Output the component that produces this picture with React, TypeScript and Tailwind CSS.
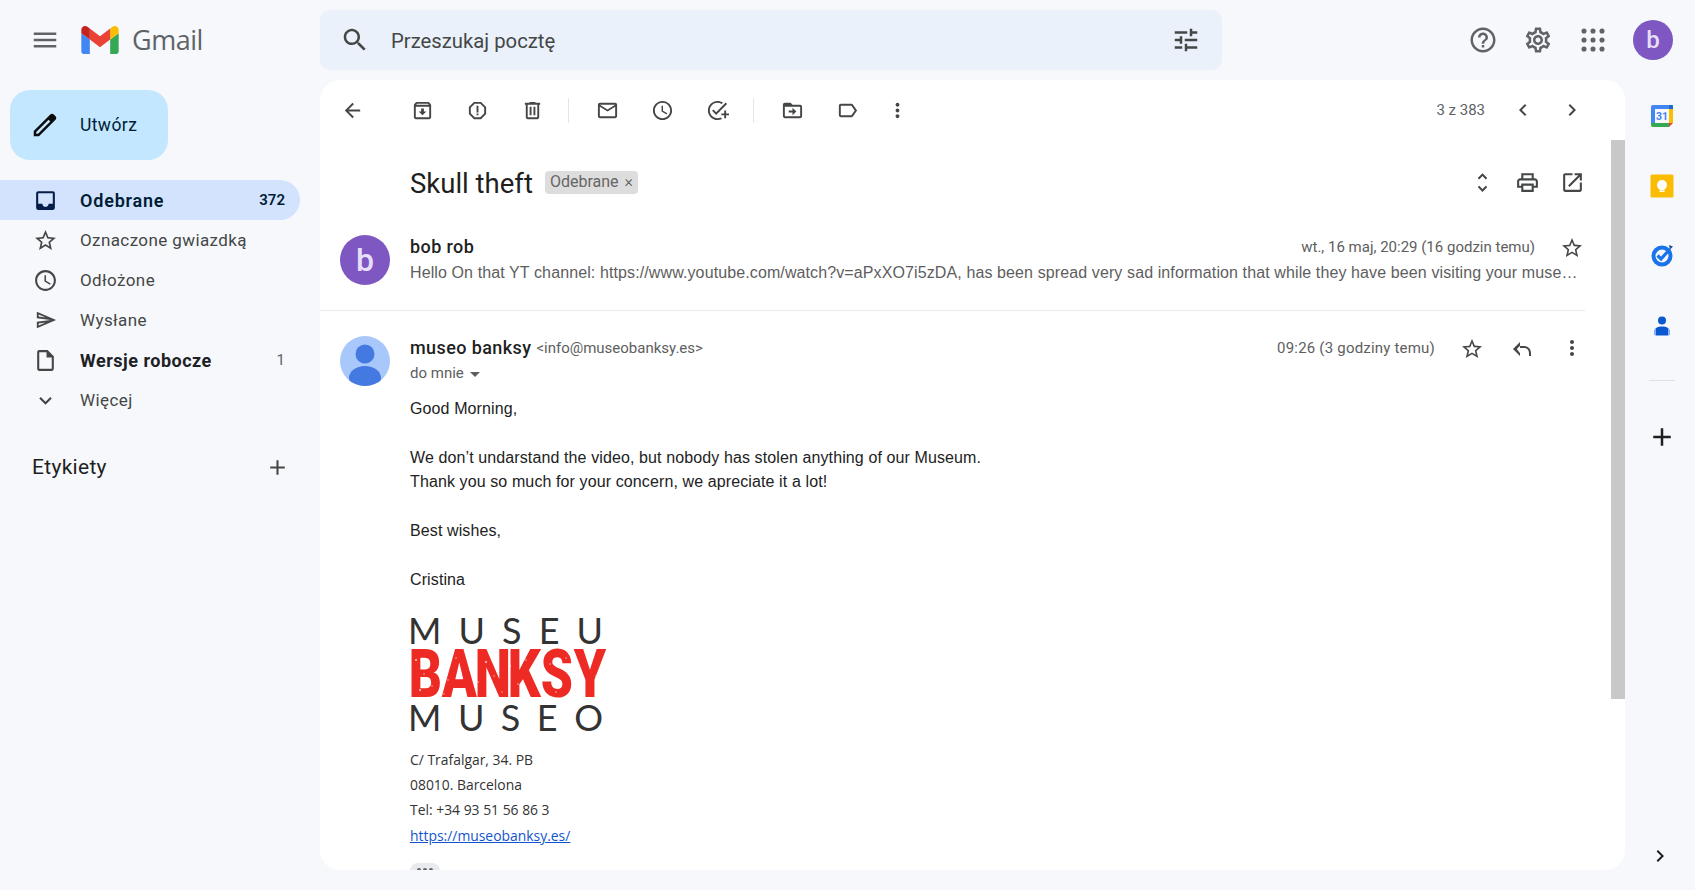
import type { ReactNode } from "react";

const P = {
  menu: "M3 18h18v-2H3v2zm0-5h18v-2H3v2zm0-7v2h18V6H3z",
  search: "M15.5 14h-.79l-.28-.27C15.41 12.59 16 11.11 16 9.5 16 5.91 13.09 3 9.5 3S3 5.91 3 9.5 5.91 16 9.5 16c1.61 0 3.09-.59 4.23-1.57l.27.28v.79l5 4.99L20.49 19l-4.99-5zm-6 0C7.01 14 5 11.99 5 9.5S7.01 5 9.5 5 14 7.01 14 9.5 11.99 14 9.5 14z",
  tune: "M3 17v2h6v-2H3zM3 5v2h10V5H3zm10 16v-2h8v-2h-8v-2h-2v6h2zM7 9v2H3v2h4v2h2V9H7zm14 4v-2H11v2h10zm-6-4h2V7h4V5h-4V3h-2v6z",
  help: "M11 18h2v-2h-2v2zm1-16C6.48 2 2 6.48 2 12s4.48 10 10 10 10-4.48 10-10S17.52 2 12 2zm0 18c-4.41 0-8-3.59-8-8s3.59-8 8-8 8 3.59 8 8-3.59 8-8 8zm0-14c-2.21 0-4 1.79-4 4h2c0-1.1.9-2 2-2s2 .9 2 2c0 2-3 1.75-3 5h2c0-2.25 3-2.5 3-5 0-2.21-1.79-4-4-4z",
  settings: "M19.43 12.98c.04-.32.07-.64.07-.98 0-.34-.03-.66-.07-.98l2.11-1.65c.19-.15.24-.42.12-.64l-2-3.46c-.09-.16-.26-.25-.44-.25-.06 0-.12.01-.17.03l-2.49 1c-.52-.4-1.08-.73-1.69-.98l-.38-2.65C14.46 2.18 14.25 2 14 2h-4c-.25 0-.46.18-.49.42l-.38 2.65c-.61.25-1.17.59-1.69.98l-2.49-1c-.06-.02-.12-.03-.18-.03-.17 0-.34.09-.43.25l-2 3.46c-.13.22-.07.49.12.64l2.11 1.65c-.04.32-.07.65-.07.98 0 .33.03.66.07.98l-2.11 1.65c-.19.15-.24.42-.12.64l2 3.46c.09.16.26.25.44.25.06 0 .12-.01.17-.03l2.49-1c.52.4 1.08.73 1.69.98l.38 2.65c.03.24.24.42.49.42h4c.25 0 .46-.18.49-.42l.38-2.65c.61-.25 1.17-.59 1.69-.98l2.49 1c.06.02.12.03.18.03.17 0 .34-.09.43-.25l2-3.46c.12-.22.07-.49-.12-.64l-2.11-1.65zm-1.98-1.71c.04.31.05.52.05.73 0 .21-.02.43-.05.73l-.14 1.13.89.7 1.08.84-.7 1.21-1.27-.51-1.04-.42-.9.68c-.43.32-.84.56-1.25.73l-1.06.43-.16 1.13-.2 1.35h-1.4l-.19-1.35-.16-1.13-1.06-.43c-.43-.18-.83-.41-1.23-.71l-.91-.7-1.06.43-1.27.51-.7-1.21 1.08-.84.89-.7-.14-1.13c-.03-.31-.05-.54-.05-.74s.02-.43.05-.73l.14-1.13-.89-.7-1.08-.84.7-1.21 1.27.51 1.04.42.9-.68c.43-.32.84-.56 1.25-.73l1.06-.43.16-1.13.2-1.35h1.39l.19 1.35.16 1.13 1.06.43c.43.18.83.41 1.23.71l.91.7 1.06-.43 1.27-.51.7 1.21-1.07.85-.89.7.14 1.13zM12 8c-2.21 0-4 1.79-4 4s1.79 4 4 4 4-1.79 4-4-1.79-4-4-4zm0 6c-1.1 0-2-.9-2-2s.9-2 2-2 2 .9 2 2-.9 2-2 2z",
  back: "M20 11H7.83l5.59-5.59L12 4l-8 8 8 8 1.41-1.41L7.83 13H20v-2z",
  archive: "M20.54 5.23l-1.39-1.68C18.88 3.21 18.47 3 18 3H6c-.47 0-.88.21-1.16.55L3.46 5.23C3.17 5.57 3 6.02 3 6.5V19c0 1.1.9 2 2 2h14c1.1 0 2-.9 2-2V6.5c0-.48-.17-.93-.46-1.27zM6.24 5h11.52l.81.97H5.44l.8-.97zM5 19V8h14v11H5zm8.45-9h-2.9v3H8l4 4 4-4h-2.55z",
  report: "M15.73 3H8.27L3 8.27v7.46L8.27 21h7.46L21 15.73V8.27L15.73 3zM19 14.9L14.9 19H9.1L5 14.9V9.1L9.1 5h5.8L19 9.1v5.8zM11 7h2v7h-2zm0 8h2v2h-2z",
  trash: "M15 4V3H9v1H4v2h1v13c0 1.1.9 2 2 2h10c1.1 0 2-.9 2-2V6h1V4h-5zm2 15H7V6h10v13zM9 8h2v9H9zm4 0h2v9h-2z",
  mail: "M20 4H4c-1.1 0-1.99.9-1.99 2L2 18c0 1.1.9 2 2 2h16c1.1 0 2-.9 2-2V6c0-1.1-.9-2-2-2zm0 14H4V8l8 5 8-5v10zm-8-7L4 6h16l-8 5z",
  clock: "M11.99 2C6.47 2 2 6.48 2 12s4.47 10 9.99 10C17.52 22 22 17.52 22 12S17.52 2 11.99 2zM12 20c-4.42 0-8-3.58-8-8s3.58-8 8-8 8 3.58 8 8-3.58 8-8 8zm.5-13H11v6l5.25 3.15.75-1.23-4.5-2.67z",
  task: "M22 5.18L10.59 16.6l-4.24-4.24 1.41-1.41 2.83 2.83 10-10L22 5.18zM12 20c-4.41 0-8-3.59-8-8s3.59-8 8-8c1.57 0 3.04.46 4.28 1.25l1.45-1.45C16.1 2.67 14.13 2 12 2 6.48 2 2 6.48 2 12s4.48 10 10 10c1.73 0 3.36-.44 4.78-1.22l-1.5-1.5c-1 .46-2.11.72-3.28.72zm7-5h-3v2h3v3h2v-3h3v-2h-3v-3h-2v3z",
  move: "M20 6h-8l-2-2H4c-1.1 0-1.99.9-1.99 2L2 18c0 1.1.9 2 2 2h16c1.1 0 2-.9 2-2V8c0-1.1-.9-2-2-2zm0 12H4V8h16v10zm-8-1l4-4-4-4v3H8v2h4v3z",
  label: "M17.63 5.84C17.27 5.33 16.67 5 16 5L5 5.01C3.9 5.01 3 5.9 3 7v10c0 1.1.9 1.99 2 1.99L16 19c.67 0 1.27-.33 1.63-.84L22 12l-4.37-6.16zM16 17H5V7h11l3.55 5L16 17z",
  more: "M12 8c1.1 0 2-.9 2-2s-.9-2-2-2-2 .9-2 2 .9 2 2 2zm0 2c-1.1 0-2 .9-2 2s.9 2 2 2 2-.9 2-2-.9-2-2-2zm0 6c-1.1 0-2 .9-2 2s.9 2 2 2 2-.9 2-2-.9-2-2-2z",
  left: "M15.41 7.41L14 6l-6 6 6 6 1.41-1.41L10.83 12z",
  right: "M10 6L8.59 7.41 13.17 12l-4.58 4.59L10 18l6-6z",
  unfold: "M12 5.83L15.17 9l1.41-1.41L12 3 7.41 7.59 8.83 9 12 5.83zm0 12.34L8.83 15l-1.41 1.41L12 21l4.59-4.59L15.17 15 12 18.17z",
  print: "M19 8h-1V3H6v5H5c-1.66 0-3 1.34-3 3v6h4v4h12v-4h4v-6c0-1.66-1.34-3-3-3zM8 5h8v3H8V5zm8 14H8v-4h8v4zm4-4h-2v-2H6v2H4v-4c0-.55.45-1 1-1h14c.55 0 1 .45 1 1v4z",
  open: "M19 19H5V5h7V3H5c-1.11 0-2 .9-2 2v14c0 1.1.89 2 2 2h14c1.1 0 2-.9 2-2v-7h-2v7zM14 3v2h3.59l-9.83 9.83 1.41 1.41L19 6.41V10h2V3h-7z",
  star: "M22 9.24l-7.19-.62L12 2 9.19 8.63 2 9.24l5.46 4.73L5.82 21 12 17.27 18.18 21l-1.63-7.03L22 9.24zM12 15.4l-3.76 2.27 1-4.28-3.32-2.88 4.38-.38L12 6.1l1.71 4.04 4.38.38-3.32 2.88 1 4.28L12 15.4z",
  reply: "M10 9V5l-7 7 7 7v-2.83L6.83 12 10 8.83V11h4c3.3 0 5 2.2 5 5.5V19h2v-2.5C21 11.8 18 9 14 9h-4z",
  inbox: "M19 3H5C3.9 3 3 3.9 3 5v14c0 1.1.9 2 2 2h14c1.1 0 2-.9 2-2V5C21 3.9 20.1 3 19 3zM19 15h-4c0 1.66-1.34 3-3 3s-3-1.34-3-3H5V5h14V15z",
  send: "M4.01 6.03l7.51 3.22-7.52-1 .01-2.22m7.5 8.72L4 17.97v-2.22l7.51-1M2.01 3L2 10l15 2-15 2 .01 7L23 12 2.01 3z",
  draft: "M14 2H6c-1.1 0-1.99.9-1.99 2L4 20c0 1.1.89 2 1.99 2H18c1.1 0 2-.9 2-2V8l-6-6zM6 20V4h7v5h5v11H6z",
  down: "M16.59 8.59L12 13.17 7.41 8.59 6 10l6 6 6-6z",
  add: "M19 13h-6v6h-2v-6H5v-2h6V5h2v6h6v2z",
  pencil: "M20.41 4.94l-1.35-1.35c-.78-.78-2.05-.78-2.83 0L3 16.82V21h4.18L20.41 7.77c.79-.78.79-2.05 0-2.83zm-14 14.12L5 19v-1.36l9.82-9.82 1.41 1.41-9.82 9.83z",
};

function Icon({ d, className }: { d: string; className: string }) {
  return (
    <svg viewBox="0 0 24 24" fill="currentColor" className={"shrink-0 " + className}>
      <path d={d} />
    </svg>
  );
}

function GmailLogo() {
  return (
    <svg viewBox="52 42 88 66" className="h-[28px] w-[38px]">
      <path fill="#4285f4" d="M58 108h14V74L52 59v43c0 3.32 2.69 6 6 6" />
      <path fill="#34a853" d="M120 108h14c3.32 0 6-2.69 6-6V59l-20 15" />
      <path fill="#fbbc04" d="M120 48v26l20-15v-8c0-7.42-8.47-11.65-14.4-7.2" />
      <path fill="#ea4335" d="M72 74V48l24 18 24-18v26L96 92" />
      <path fill="#c5221f" d="M52 51v8l20 15V48l-5.6-4.2c-5.94-4.45-14.4-.22-14.4 7.2" />
    </svg>
  );
}

function NavRow({ icon, label, count, active, bold, iconClass }: { icon: string; label: string; count?: string; active?: boolean; bold?: boolean; iconClass?: string }) {
  return (
    <div
      className={[
        "flex h-[40px] w-[300px] items-center rounded-r-full pl-[33px] pr-[15px]",
        active
          ? "bg-[#d3e3fd] text-[18px] font-semibold tracking-[0.8px] text-[#001d35]"
          : bold
            ? "text-[18px] font-bold tracking-[0.5px] text-[#202124]"
            : "text-[17px] tracking-[0.4px] text-[#444746]",
      ].join(" ")}
    >
      <span className="flex h-[25px] w-[25px] shrink-0 items-center justify-center">
        <Icon d={icon} className={(iconClass ?? "h-[25px] w-[25px]") + (active ? " text-[#041e49]" : " text-[#444746]")} />
      </span>
      <span className="ml-[22px] flex-1 pt-[1px]">{label}</span>
      {count ? <span className={active ? "text-[15px] font-semibold tracking-normal" : "text-[15px] font-normal tracking-normal text-[#5f6368]"}>{count}</span> : null}
    </div>
  );
}

function Tool({ d, className }: { d: string; className?: string }) {
  return (
    <div className={"flex h-[40px] w-[55px] items-center justify-center text-[#444746] " + (className ?? "")}>
      <Icon d={d} className="h-[23px] w-[23px]" />
    </div>
  );
}

function Divider() {
  return <div className="mx-[8px] h-[25px] w-px bg-[#e3e5e8]" />;
}

function Avatar({ children, className }: { children: ReactNode; className: string }) {
  return (
    <div className={"flex h-[50px] w-[50px] shrink-0 items-center justify-center overflow-hidden rounded-full " + className}>
      {children}
    </div>
  );
}

const SPECKS = [
  [6, 8], [14, 22], [22, 34], [30, 12], [38, 28], [46, 6], [52, 38], [60, 18], [68, 30], [76, 10],
  [84, 24], [92, 40], [100, 14], [108, 32], [116, 8], [124, 20], [132, 36], [140, 12], [148, 28], [156, 6],
  [164, 18], [172, 34], [180, 10], [186, 24], [10, 38], [34, 42], [58, 4], [82, 8], [112, 42], [146, 40],
];

function MuseumLogo() {
  return (
    <div className="mt-[25px] w-[193px] font-['Lato',sans-serif] text-[#333333]">
      <div className="-ml-[2px] flex h-[26px] items-center justify-between text-[36px] leading-[26px]">
        {"MUSEU".split("").map((c, i) => <span key={i}>{c}</span>)}
      </div>
      <div className="relative mt-[8px] h-[48px]">
        <div className="-ml-[5px] grid h-full grid-cols-6 font-['Roboto',sans-serif] text-[66px] font-black leading-[48px] text-[#ee2a24]">
          {"BANKSY".split("").map((c, i) => <span key={i} className="scale-x-[0.78] text-center">{c}</span>)}
        </div>
        <svg viewBox="0 0 193 46" className="absolute inset-0 h-full w-full">
          {SPECKS.map(([x, y], i) => <circle key={i} cx={x} cy={y} r={i % 3 === 0 ? 1.1 : 0.7} fill="#ffffff" opacity="0.75" />)}
        </svg>
      </div>
      <div className="-ml-[2px] mt-[5px] flex h-[26px] items-center justify-between text-[36px] leading-[26px]">
        {"MUSEO".split("").map((c, i) => <span key={i}>{c}</span>)}
      </div>
    </div>
  );
}

function RailIcons() {
  return (
    <div className="flex flex-col items-center pl-[3px] pt-[24px]">
      <svg viewBox="0 0 24 24" className="h-[24px] w-[24px]">
        <path fill="#4285f4" d="M1 3c0-1.100.9-2 2-2h17v4H5v14H1z" />
        <path fill="#1967d2" d="M19 1h3c.6 0 1 .4 1 1v3h-4z" />
        <path fill="#fbbc04" d="M19 5h4v14h-4z" />
        <path fill="#34a853" d="M1 19h18v4H3c-1.100 0-2-.9-2-2z" />
        <path fill="#ea4335" d="M19 19h4l-4 4z" />
        <text x="12" y="16" textAnchor="middle" fontSize="10.5" fontWeight="700" fontFamily="Roboto, sans-serif" fill="#4285f4">31</text>
      </svg>
      <svg viewBox="0 0 24 24" className="mt-[46px] h-[24px] w-[24px]">
        <rect x="0.5" y="0.5" width="23" height="23" rx="1.5" fill="#fbbc04" />
        <circle cx="12" cy="11" r="5" fill="#ffffff" />
        <rect x="9.5" y="14" width="5" height="2" fill="#ffffff" />
        <rect x="9.5" y="16.5" width="5" height="1.500" fill="#ffffff" />
      </svg>
      <svg viewBox="0 0 24 24" className="mt-[45px] h-[24px] w-[24px]">
        <circle cx="12" cy="13" r="8.5" fill="none" stroke="#1a73e8" strokeWidth="4" />
        <path d="M7.5 12.5l3.5 3.5 9-10" fill="none" stroke="#1a73e8" strokeWidth="3.2" />
        <path d="M19 2l4 1.5-3 3z" fill="#174ea6" />
      </svg>
      <svg viewBox="0 0 24 24" className="mt-[47px] h-[24px] w-[24px]">
        <circle cx="12" cy="6.5" r="4" fill="#0b57d0" />
        <path d="M4 19c0-4 2-6.5 8-6.5s8 2.500 8 6.500c0 1.500-1 2.500-2.500 2.500h-11C5 21.500 4 20.500 4 19z" fill="#0b57d0" />
        <path d="M4 19c0-2 .5-3.500 2-4.500V21.500C5 21.500 4 20.500 4 19zM20 19c0-2-.5-3.500-2-4.500v7c1 0 2-1 2-2.500z" fill="#8ab4f8" />
      </svg>
      <div className="mt-[42px] h-px w-[26px] bg-[#dde0e4]" />
      <Icon d={P.add} className="mt-[41px] h-[30px] w-[30px] text-[#1f1f1f]" />
    </div>
  );
}

export default function App() {
  return (
    <div className="flex h-[890px] w-[1695px] flex-col overflow-hidden bg-[#f6f8fc] font-['Roboto',sans-serif]">
      {/* top bar */}
      <header className="flex h-[80px] shrink-0 items-center">
        <div className="flex w-[320px] items-center pl-[30px]">
          <Icon d={P.menu} className="h-[30px] w-[30px] text-[#5f6368]" />
          <div className="ml-[21px]"><GmailLogo /></div>
          <span className="ml-[13px] font-['Open_Sans',sans-serif] text-[27px] tracking-[-0.5px] text-[#5f6368]">Gmail</span>
        </div>
        <div className="flex h-[60px] w-[902px] items-center rounded-[10px] bg-[#eaf1fb] px-[20px]">
          <Icon d={P.search} className="h-[30px] w-[30px] text-[#444746]" />
          <span className="ml-[21px] flex-1 pt-[2px] text-[20.300px] text-[#444746]">Przeszukaj pocztę</span>
          <Icon d={P.tune} className="-ml-[1px] mr-[1px] h-[30px] w-[30px] text-[#444746]" />
        </div>
        <div className="ml-[246px] flex items-center">
          <Icon d={P.help} className="h-[30px] w-[30px] text-[#5f6368]" />
          <Icon d={P.settings} className="ml-[25px] h-[30px] w-[30px] text-[#5f6368]" />
          <svg viewBox="0 0 20 20" fill="#5f6368" className="ml-[25px] h-[30px] w-[30px]">
            {[4, 10, 16].flatMap((y) => [4, 10, 16].map((x) => <circle key={`${x}-${y}`} cx={x} cy={y} r="1.7" />))}
          </svg>
          <div className="ml-[25px] flex h-[40px] w-[40px] items-center justify-center rounded-full bg-[#7e57c2] text-[24px] font-medium text-[#e8def8]">b</div>
        </div>
      </header>

      <div className="flex min-h-0 flex-1">
        {/* sidebar */}
        <aside className="w-[320px] shrink-0">
          <div className="ml-[10px] mt-[10px] flex h-[70px] w-[158px] items-center rounded-[20px] bg-[#c2e7ff] pl-[20px] text-[17.500px] tracking-[0.4px] text-[#001d35]">
            <Icon d={P.pencil} className="h-[30px] w-[30px] text-[#0b0b0b]" />
            <span className="ml-[20px]">Utwórz</span>
          </div>
          <nav className="mt-[20px]">
            <NavRow icon={P.inbox} label="Odebrane" count="372" active />
            <NavRow icon={P.star} label="Oznaczone gwiazdką" />
            <NavRow icon={P.clock} label="Odłożone" />
            <NavRow icon={P.send} label="Wysłane" iconClass="h-[22px] w-[22px]" />
            <NavRow icon={P.draft} label="Wersje robocze" count="1" bold />
            <NavRow icon={P.down} label="Więcej" />
          </nav>
          <div className="mt-[32px] flex w-[300px] items-center justify-between pl-[32px] pr-[10px] text-[21px] tracking-[0.3px] text-[#1f1f1f]">
            <span>Etykiety</span>
            <Icon d={P.add} className="h-[25px] w-[25px] text-[#444746]" />
          </div>
        </aside>

        {/* message panel */}
        <main className="mb-[20px] flex w-[1305px] shrink-0 flex-col overflow-hidden rounded-[20px] bg-white">
          <div className="flex h-[60px] shrink-0 items-center pl-[5px]">
            <Tool d={P.back} />
            <div className="w-[15px]" />
            <Tool d={P.archive} />
            <Tool d={P.report} />
            <Tool d={P.trash} />
            <Divider />
            <Tool d={P.mail} className="ml-[3px]" />
            <Tool d={P.clock} />
            <Tool d={P.task} />
            <Divider />
            <Tool d={P.move} className="ml-[3px]" />
            <Tool d={P.label} />
            <Tool d={P.more} className="-ml-[5px]" />
            <div className="flex-1" />
            <span className="text-[15px] text-[#5f6368]">3 z 383</span>
            <Icon d={P.left} className="ml-[26px] h-[24px] w-[24px] text-[#444746]" />
            <Icon d={P.right} className="ml-[25px] h-[24px] w-[24px] text-[#444746]" />
            <div className="w-[41px]" />
          </div>

          <div className="flex min-h-0 flex-1">
            <div className="min-w-0 flex-1 overflow-hidden">
              <div className="mt-[24px] flex h-[36px] items-center pl-[90px] pr-[26px]">
                <h1 className="pt-[3px] text-[27.500px] font-normal leading-none text-[#1f1f1f]">Skull theft</h1>
                <span className="ml-[12px] flex h-[23px] items-center rounded-[4px] bg-[#dddddd] px-[5px] text-[16px] text-[#666666]">
                  Odebrane<span className="ml-[6px] text-[16px] font-light text-[#555555]">×</span>
                </span>
                <div className="flex-1" />
                <Icon d={P.unfold} className="h-[25px] w-[25px] text-[#444746]" />
                <Icon d={P.print} className="ml-[20px] h-[25px] w-[25px] text-[#444746]" />
                <Icon d={P.open} className="ml-[20px] h-[25px] w-[25px] text-[#444746]" />
              </div>

              <div className="mr-[26px] mt-[35px] flex border-b border-[#e8eaed] pb-[25px] pl-[20px]">
                <Avatar className="bg-[#7e57c2] text-[32px] font-medium text-[#e8def8]">b</Avatar>
                <div className="ml-[20px] min-w-0 flex-1">
                  <div className="flex h-[24px] items-center">
                    <span className="-mt-[2px] text-[18px] font-medium tracking-[0.4px] text-[#1f1f1f]">bob rob</span>
                    <span className="ml-auto text-[15px] text-[#5e5e5e]">wt., 16 maj, 20:29 (16 godzin temu)</span>
                    <Icon d={P.star} className="ml-[25px] mr-[1px] mt-[2px] h-[24px] w-[24px] text-[#444746]" />
                  </div>
                  <p className="mt-[2px] truncate pr-[6px] font-['Liberation_Sans',sans-serif] text-[16px] leading-[24px] tracking-[0.11px] text-[#5e5e5e]">
                    Hello On that YT channel: https://www.youtube.com/watch?v=aPxXO7i5zDA, has been spread very sad information that while they have been visiting your museum they have stolen a skull from the exhibition
                  </p>
                </div>
              </div>

              <div className="mt-[24px] flex pl-[20px] pr-[26px]">
                <Avatar className="mt-[1px] items-start bg-[#a8c7fa]">
                  <svg viewBox="0 0 50 50" className="h-[50px] w-[50px]">
                    <circle cx="25" cy="18" r="9.500" fill="#4479e1" />
                    <ellipse cx="25" cy="42" rx="16" ry="12" fill="#4479e1" />
                  </svg>
                </Avatar>
                <div className="ml-[20px] min-w-0 flex-1">
                  <div className="mt-[1px] flex h-[24px] items-center">
                    <span className="-mt-[2px] text-[18px] font-medium tracking-[0.4px] text-[#1f1f1f]">museo banksy</span>
                    <span className="ml-[5px] text-[15px] text-[#5e5e5e]">&lt;info@museobanksy.es&gt;</span>
                    <span className="ml-auto text-[15px] tracking-[0.2px] text-[#5e5e5e]">09:26 (3 godziny temu)</span>
                    <Icon d={P.star} className="ml-[25px] mt-[2px] h-[24px] w-[24px] text-[#444746]" />
                    <Icon d={P.reply} className="ml-[26px] mt-[2px] h-[24px] w-[24px] text-[#444746]" />
                    <Icon d={P.more} className="ml-[26px] mr-[1px] h-[24px] w-[24px] text-[#444746]" />
                  </div>
                  <div className="mt-[1px] flex h-[24px] items-center text-[15px] text-[#5e5e5e]">
                    do mnie
                    <span className="ml-[6px] mt-[2px] h-0 w-0 border-x-[5px] border-t-[5px] border-x-transparent border-t-[#5e5e5e]" />
                  </div>
                  <div className="mt-[12px] font-['Liberation_Sans',sans-serif] text-[16px] leading-[24.400px] tracking-[0.11px] text-[#222222]">
                    <p>Good Morning,</p>
                    <p className="mt-[24.400px]">We don’t undarstand the video, but nobody has stolen anything of our Museum.</p>
                    <p>Thank you so much for your concern, we apreciate it a lot!</p>
                    <p className="mt-[24.400px]">Best wishes,</p>
                    <p className="mt-[24.400px]">Cristina</p>
                  </div>
                  <MuseumLogo />
                  <div className="mt-[17px] font-['Open_Sans',sans-serif] text-[13.900px] leading-[25px] text-[#333333]">
                    <p>C/ Trafalgar, 34. PB</p>
                    <p>08010. Barcelona</p>
                    <p>Tel: +34 93 51 56 86 3</p>
                    <p className="mt-[1px] text-[#1155cc] underline">https://museobanksy.es/</p>
                  </div>
                  <div className="mt-[15px] flex h-[16px] w-[30px] justify-center gap-[2px] rounded-[8px] bg-[#e8eaed] pt-[5px]">
                    <span className="h-[4px] w-[4px] rounded-full bg-[#5f6368]" />
                    <span className="h-[4px] w-[4px] rounded-full bg-[#5f6368]" />
                    <span className="h-[4px] w-[4px] rounded-full bg-[#5f6368]" />
                  </div>
                </div>
              </div>
            </div>
            <div className="w-[14px] shrink-0">
              <div className="h-[559px] bg-[#c8c8c8]" />
            </div>
          </div>
        </main>

        {/* right rail */}
        <aside className="flex min-w-0 flex-1 flex-col items-center pb-[22px]">
          <RailIcons />
          <div className="flex-1" />
          <Icon d={P.right} className="-ml-[1px] h-[24px] w-[24px] text-[#1f1f1f]" />
        </aside>
      </div>
    </div>
  );
}
